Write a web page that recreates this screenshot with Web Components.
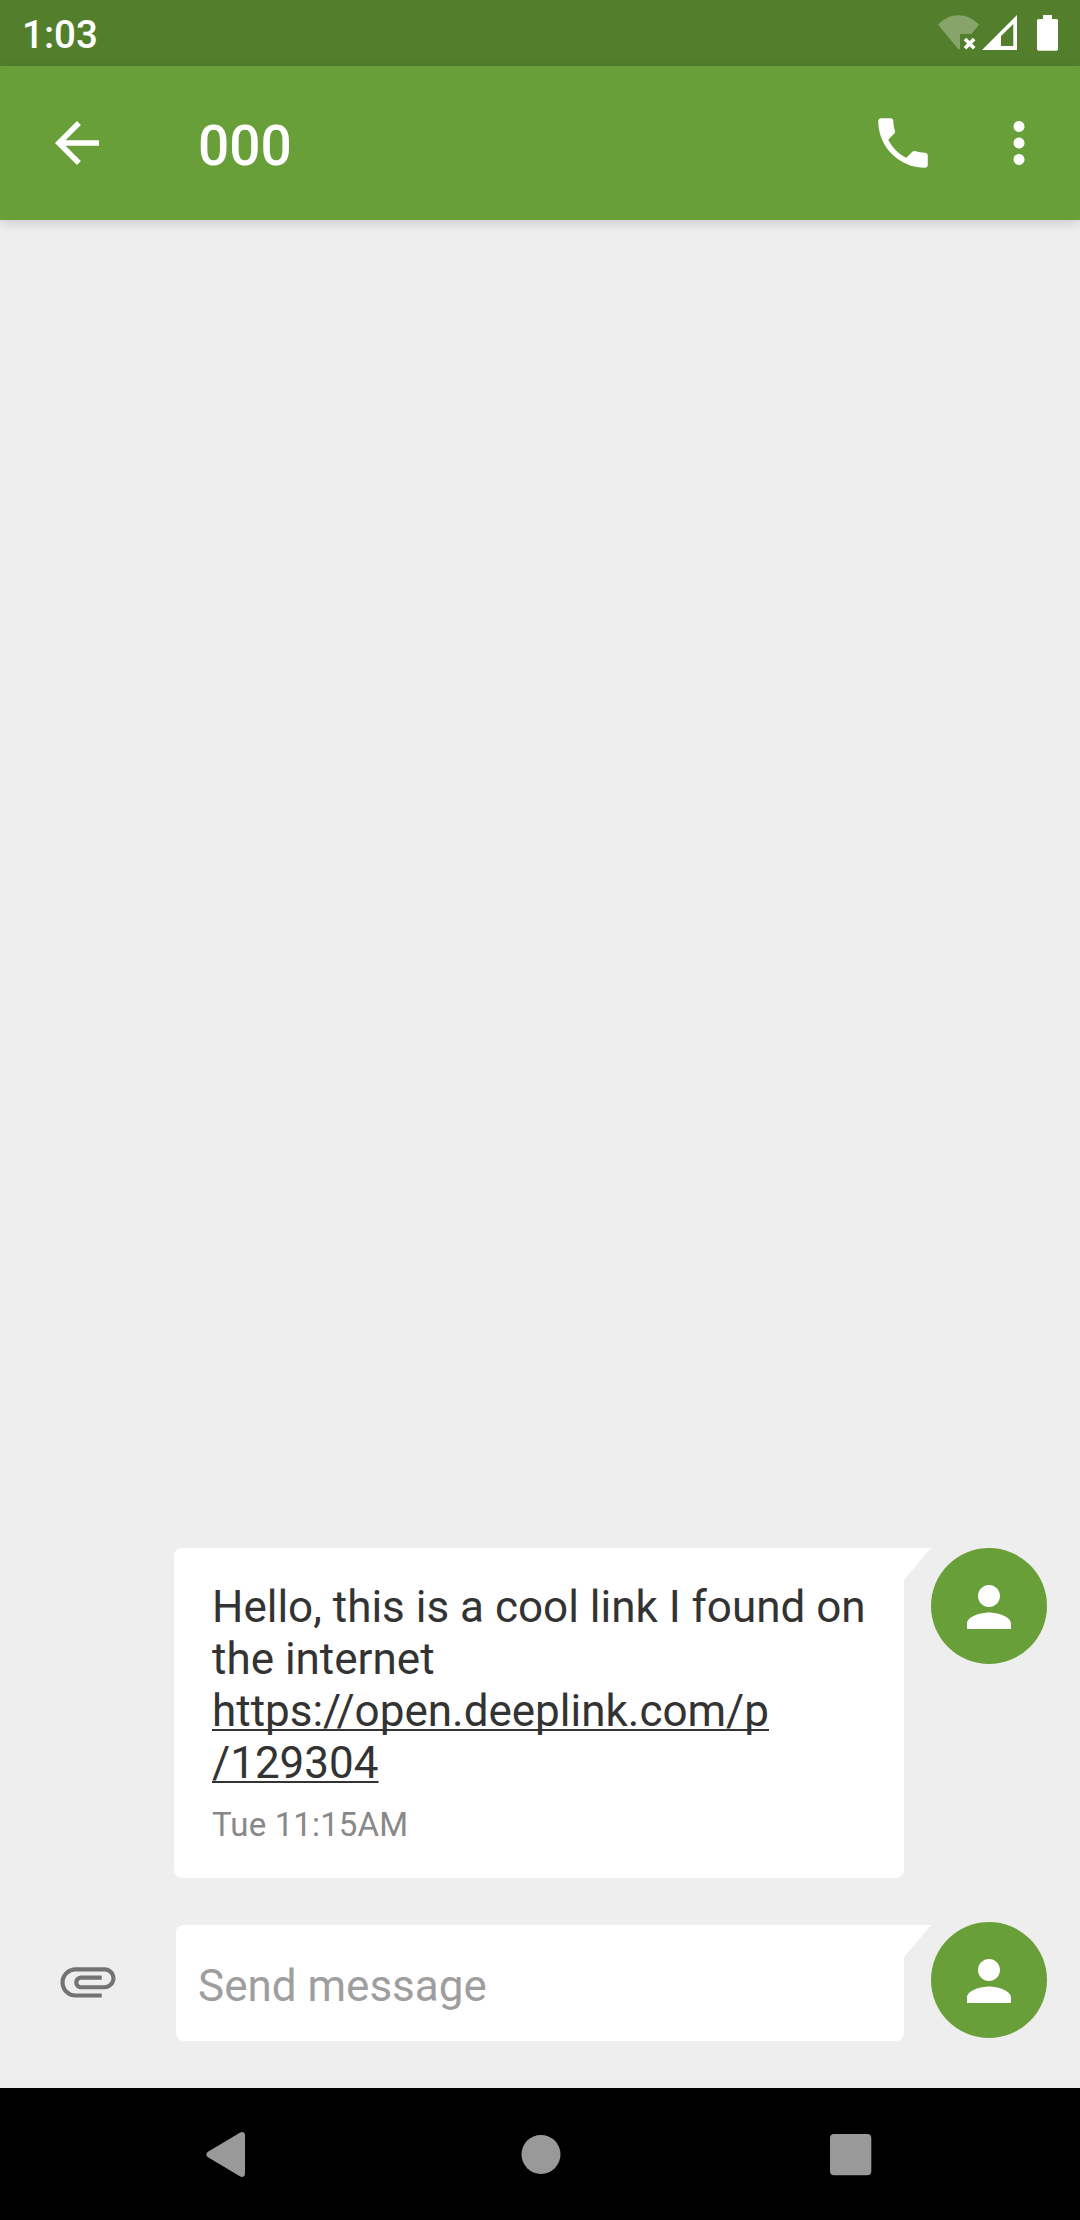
<!DOCTYPE html>
<html lang="en">
<head>
<meta charset="utf-8">
<title>000</title>
<style>
html,body{margin:0;padding:0}
body{width:1080px;height:2220px;overflow:hidden;background:#eee;font-family:Roboto,sans-serif}
</style>
</head>
<body>
<chat-screen></chat-screen>
<script>
const define = (name, html) => customElements.define(name, class extends HTMLElement {
  constructor() {
    super();
    const t = document.createElement('template');
    t.innerHTML = html;
    this.attachShadow({mode: 'open'}).append(t.content.cloneNode(true));
  }
});

const ICONS = {
  back: 'M20 11H7.83l5.59-5.59L12 4l-8 8 8 8 1.41-1.41L7.83 13H20v-2z',
  phone: 'M6.62 10.79c1.44 2.83 3.76 5.14 6.59 6.59l2.2-2.2c.27-.27.67-.36 1.02-.24 1.12.37 2.33.57 3.57.57.55 0 1 .45 1 1V20c0 .55-.45 1-1 1-9.39 0-17-7.61-17-17 0-.55.45-1 1-1h3.5c.55 0 1 .45 1 1 0 1.25.2 2.45.57 3.57.11.35.03.74-.25 1.02l-2.2 2.2z',
  more: 'M12 8c1.1 0 2-.9 2-2s-.9-2-2-2-2 .9-2 2 .9 2 2 2zm0 2c-1.1 0-2 .9-2 2s.9 2 2 2 2-.9 2-2-.9-2-2-2zm0 6c-1.1 0-2 .9-2 2s.9 2 2 2 2-.9 2-2-.9-2-2-2z',
  person: 'M12 12c2.21 0 4-1.79 4-4s-1.79-4-4-4-4 1.79-4 4 1.79 4 4 4zm0 2c-2.67 0-8 1.34-8 4v2h16v-2c0-2.66-5.33-4-8-4z',
  attachment: 'M7.5 18C4.46 18 2 15.54 2 12.5S4.46 7 7.5 7H18c2.21 0 4 1.79 4 4s-1.79 4-4 4H9.5C8.12 15 7 13.88 7 12.5S8.12 10 9.5 10H17v1.5H9.5c-.55 0-1 .45-1 1s.45 1 1 1H18c1.38 0 2.5-1.12 2.5-2.5S19.38 8.5 18 8.5H7.5c-2.21 0-4 1.79-4 4s1.79 4 4 4H17V18H7.5z'
};

customElements.define('md-icon', class extends HTMLElement {
  connectedCallback() {
    this.attachShadow({mode: 'open'}).innerHTML =
      `<style>:host{display:block;width:66px;height:66px;flex:none}svg{display:block;fill:currentColor}</style>
       <svg width="66" height="66" viewBox="0 0 24 24"><path d="${ICONS[this.getAttribute('name')]}"/></svg>`;
  }
});

define('status-bar', `<style>
:host{display:flex;justify-content:space-between;height:66px;background:#537f2c;color:#fff;flex:none}
time{font-weight:500;font-size:38.5px;line-height:46px;padding:12px 0 0 22px}
svg{display:block}
</style>
<time>1:03</time>
<svg width="150" height="66" viewBox="930 0 150 66" fill="#fff">
<path fill-opacity=".3" d="M938 24.5C950 12 967 12 979 24.5L971.5 34H960V48.5L958.8 49.7Z"/>
<path d="M965 39l9.200 9.200M974.200 39l-9.200 9.200" stroke="#fff" stroke-width="3.600"/>
<path fill-rule="evenodd" d="M982 50L1017 15V50ZM1001 36V46H1013.3V24Z"/>
<path d="M1043 15H1052V19H1056.4Q1058 19 1058 20.6V49Q1058 50.7 1056.4 50.7H1038.6Q1037 50.7 1037 49V20.6Q1037 19 1038.6 19H1043Z"/>
</svg>`);

define('app-bar', `<style>
:host{display:flex;align-items:center;height:154px;box-sizing:border-box;padding:0 28px 0 44px;background:#689f38;color:#fff;flex:none;box-shadow:0 3px 11px rgba(0,0,0,.15);z-index:1}
h1{flex:1;margin:0 0 0 88px;font-weight:500;font-size:55px;line-height:64px;padding-top:5px}
.more{margin-left:50px}
</style>
<md-icon name="back"></md-icon><h1><slot></slot></h1><md-icon name="phone"></md-icon><md-icon class="more" name="more"></md-icon>`);

define('user-avatar', `<style>
:host{display:flex;box-sizing:border-box;width:116px;height:116px;padding:26px 0 0 25px;border-radius:50%;background:#689f38;color:#fff;flex:none}
</style><md-icon name="person"></md-icon>`);

define('speech-bubble', `<style>
:host{display:flex;align-items:flex-start;flex:none}
.box{flex:1;align-self:stretch;box-sizing:border-box;background:#fff;border-radius:8px 0 8px 8px}
svg{display:block;flex:none}
</style><div class="box"><slot></slot></div><svg width="27" height="32"><path d="M0 0H27L0 32Z" fill="#fff"/></svg>`);

define('chat-message', `<style>
:host{display:flex;align-items:flex-start;padding:0 33px 0 174px}
speech-bubble{width:757px;height:330px}
.body{padding:33px 0 0 38px;font-size:44px;line-height:52px;color:#333}
.time{padding:16px 0 0 38px;font-size:33px;line-height:40px;letter-spacing:.15px;color:#888}
</style>
<speech-bubble><div class="body"><slot></slot></div><div class="time"><slot name="time"></slot></div></speech-bubble>
<user-avatar></user-avatar>`);

define('message-composer', `<style>
:host{display:flex;align-items:flex-start;height:166px;padding:44px 33px 0 55px}
md-icon{color:#737373;margin-top:26px}
speech-bubble{width:755px;height:116px;margin:3px 0 0 55px}
.hint{padding:35px 0 0 22px;font-size:44px;line-height:52px;color:#9e9e9e}
</style>
<md-icon name="attachment"></md-icon>
<speech-bubble><div class="hint">Send message</div></speech-bubble>
<user-avatar></user-avatar>`);

define('nav-bar', `<style>
:host{display:flex;justify-content:space-between;align-items:center;height:132px;box-sizing:border-box;padding:0 197px 0 194px;background:#000;flex:none}
svg{display:block}
.home{margin-left:4px}
</style>
<svg width="66" height="66" viewBox="194 2121 66 66"><path fill="#999" d="M207.6 2152L239.8 2132.7Q241 2132 242.5 2132Q245 2132.3 245 2135V2174Q245 2176.7 242.5 2177Q241 2177 239.8 2176.3L207.6 2157Q205 2154.5 207.6 2152Z"/></svg>
<svg class="home" width="66" height="66" viewBox="507.5 2121 66 66"><circle cx="540.5" cy="2154.4" r="19.5" fill="#999"/></svg>
<svg width="66" height="66" viewBox="817 2121 66 66"><rect x="830" y="2134" width="41.3" height="41.3" rx="4" fill="#999"/></svg>`);

define('chat-screen', `<style>
:host{display:flex;flex-direction:column;width:1080px;height:2220px;background:#eee}
main{flex:1;display:flex;flex-direction:column;justify-content:flex-end}
a{color:inherit;text-decoration:underline;text-decoration-thickness:2px;text-underline-offset:3px;text-decoration-skip-ink:none}
</style>
<status-bar></status-bar>
<app-bar>000</app-bar>
<main>
<chat-message>Hello, this is a cool link I found on<br>the internet<br><a>https://open.deeplink.com/p<br>/129304</a><span slot="time">Tue 11:15AM</span></chat-message>
<message-composer></message-composer>
</main>
<nav-bar></nav-bar>`);
</script>
</body>
</html>
